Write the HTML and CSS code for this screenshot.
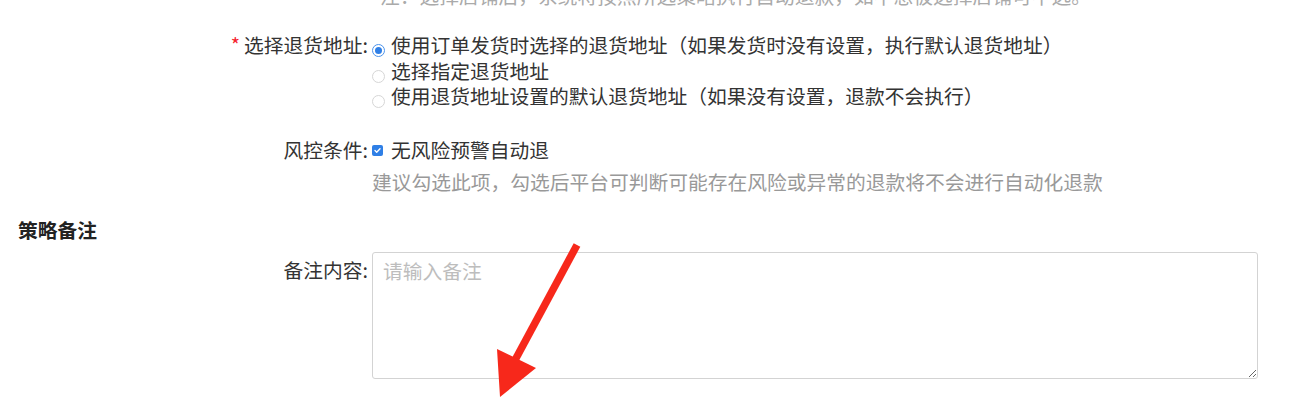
FILE: index.html
```html
<!DOCTYPE html>
<html lang="zh-CN">
<head>
<meta charset="utf-8">
<title>退款策略</title>
<link rel="stylesheet" href="styles.css">
</head>
<body>
<div class="page">
  <div class="form-row row-top">
    <div class="label"></div>
    <div class="content hint">注：选择店铺后，系统将按照所选策略执行自动退款，如不想被选择店铺可不选。</div>
  </div>

  <div class="form-row row-address">
    <div class="label"><span class="req">*</span>选择退货地址:</div>
    <div class="content">
      <div class="radio-group">
        <div class="radio checked"><span class="radio-dot"></span><span>使用订单发货时选择的退货地址（如果发货时没有设置，执行默认退货地址）</span></div>
        <div class="radio"><span class="radio-dot"></span><span>选择指定退货地址</span></div>
        <div class="radio"><span class="radio-dot"></span><span>使用退货地址设置的默认退货地址（如果没有设置，退款不会执行）</span></div>
      </div>
    </div>
  </div>

  <div class="form-row row-risk">
    <div class="label">风控条件:</div>
    <div class="content">
      <div class="checkbox"><span class="check-box"><svg viewBox="0 0 11 11" width="11" height="11"><path d="M3 5.6 L4.7 7.2 L8 3.8" fill="none" stroke="#fff" stroke-width="1.4" stroke-linecap="round" stroke-linejoin="round"/></svg></span><span>无风险预警自动退</span></div>
      <div class="hint hint-risk">建议勾选此项，勾选后平台可判断可能存在风险或异常的退款将不会进行自动化退款</div>
    </div>
  </div>

  <h3 class="section-title">策略备注</h3>

  <div class="form-row row-remark">
    <div class="label label-remark">备注内容:</div>
    <div class="content">
      <textarea class="remark" placeholder="请输入备注"></textarea>
    </div>
  </div>

  <svg class="arrow" width="1306" height="400" viewBox="0 0 1306 400">
    <line x1="577" y1="245" x2="514" y2="362" stroke="#f7281b" stroke-width="7.5"/>
    <polygon points="497,349 536,368 500,397" fill="#f7281b"/>
  </svg>
</div>
</body>
</html>
```

FILE: styles.css
```css
html, body {
  margin: 0;
  padding: 0;
  background: #fff;
}
body {
  font-family: "Noto Sans CJK SC", "Noto Sans", sans-serif;
  font-size: 19.75px;
  line-height: 25.5px;
  color: #333;
  overflow: hidden;
}
.page {
  position: relative;
  display: flow-root;
  height: 400px;
}
.form-row {
  display: grid;
  grid-template-columns: 368px 1fr;
  column-gap: 4px;
}
.label {
  text-align: right;
  color: #333;
  white-space: nowrap;
}
.req {
  color: #f5222d;
  margin-right: 4px;
}
.hint {
  color: #999;
}
.row-top {
  margin-top: -17.5px;
}
.row-top .hint {
  color: #aaa;
  padding-left: 8px;
  white-space: nowrap;
}
.row-address {
  margin-top: 24.25px;
}
.radio-group {
  display: flex;
  flex-direction: column;
}
.radio {
  display: flex;
  align-items: flex-start;
  white-space: nowrap;
}
.radio-dot {
  box-sizing: border-box;
  flex: none;
  width: 13px;
  height: 13px;
  margin-top: 12px;
  margin-right: 6px;
  border: 1px solid #d6d6d6;
  border-radius: 50%;
  background: #fff;
  display: flex;
  align-items: center;
  justify-content: center;
}
.radio.checked .radio-dot {
  border-color: #4b93ec;
}
.radio.checked .radio-dot::after {
  content: "";
  width: 7px;
  height: 7px;
  border-radius: 50%;
  background: #2f7fe6;
}
.row-risk {
  margin-top: 28.5px;
}
.checkbox {
  display: flex;
  align-items: flex-start;
}
.check-box {
  flex: none;
  width: 11px;
  height: 11px;
  margin-top: 7.5px;
  margin-right: 8px;
  border-radius: 2px;
  background: #2f7fe6;
  display: flex;
}
.hint-risk {
  margin-top: 6.5px;
}
.section-title {
  margin: 22px 0 0 18px;
  font-size: 19.75px;
  line-height: 25.5px;
  font-weight: bold;
  color: #222;
}
.row-remark {
  margin-top: 9.25px;
}
.label-remark {
  padding-top: 5.25px;
}
.remark {
  display: block;
  box-sizing: border-box;
  width: 886px;
  height: 127px;
  margin: 0;
  padding: 5px 10px;
  border: 1px solid #d3d3d3;
  border-radius: 3px;
  font-family: "Noto Sans CJK SC", "Noto Sans", sans-serif;
  font-size: 19.75px;
  line-height: 25.5px;
  color: #333;
  outline: none;
}
.remark::placeholder {
  color: #bdbdbd;
}
.arrow {
  position: absolute;
  left: 0;
  top: 0;
  pointer-events: none;
}
```
